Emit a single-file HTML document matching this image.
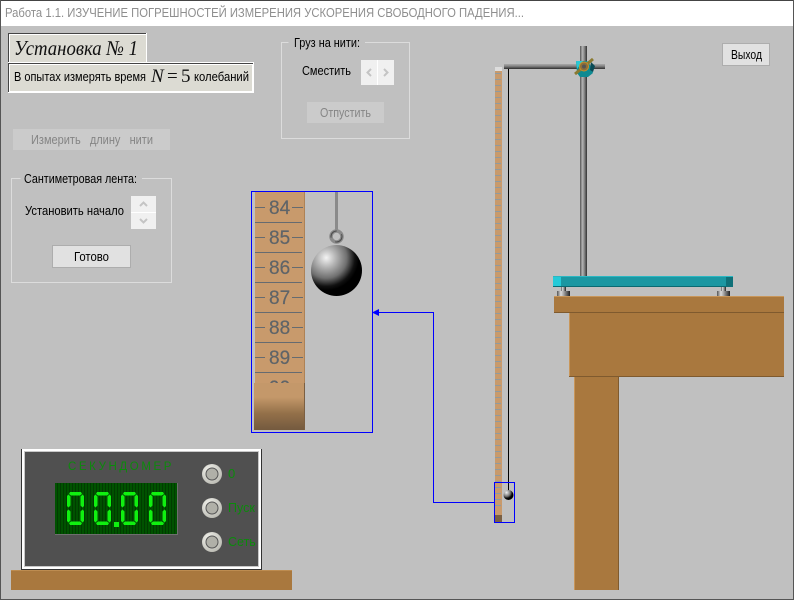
<!DOCTYPE html>
<html><head><meta charset="utf-8"><style>
html,body{margin:0;padding:0;background:#c0c0c0}
svg{display:block}
text{font-family:"Liberation Sans",sans-serif;font-size:13px}
.s{font-family:"Liberation Serif",serif}
.r{font-size:19px;fill:#5f6468;stroke:#5f6468;stroke-width:.2px}
</style></head><body>
<svg width="794" height="600" viewBox="0 0 794 600" xmlns="http://www.w3.org/2000/svg">
<defs>
<linearGradient id="vr" x1="0" x2="1" y1="0" y2="0"><stop offset="0" stop-color="#555"/><stop offset=".35" stop-color="#b5b5b5"/><stop offset=".6" stop-color="#8a8a8a"/><stop offset="1" stop-color="#333"/></linearGradient>
<linearGradient id="hr" x1="0" x2="0" y1="0" y2="1"><stop offset="0" stop-color="#aaa"/><stop offset=".4" stop-color="#888"/><stop offset="1" stop-color="#2e2e2e"/></linearGradient>
<linearGradient id="ft" x1="0" x2="1" y1="0" y2="0"><stop offset="0" stop-color="#555"/><stop offset=".3" stop-color="#ddd"/><stop offset="1" stop-color="#222"/></linearGradient>
<linearGradient id="rb" x1="0" x2="0" y1="0" y2="1"><stop offset="0" stop-color="#c4986a"/><stop offset=".3" stop-color="#c4986a"/><stop offset=".65" stop-color="#937049"/><stop offset="1" stop-color="#745a3f"/></linearGradient>
<radialGradient id="ball" cx=".3" cy=".25" r=".8"><stop offset="0" stop-color="#f4f4f4"/><stop offset=".22" stop-color="#b8b8b8"/><stop offset=".5" stop-color="#707070"/><stop offset=".7" stop-color="#111"/><stop offset=".8" stop-color="#000"/></radialGradient>
<radialGradient id="btn" cx=".35" cy=".3" r=".8"><stop offset="0" stop-color="#f0f0ea"/><stop offset="1" stop-color="#b8b8b0"/></radialGradient>
<pattern id="scan" width="3" height="3" patternUnits="userSpaceOnUse"><rect width="3" height="3" fill="#005200"/><rect width="1" height="3" fill="#003c00"/></pattern>
<pattern id="tk" width="6" height="6" patternUnits="userSpaceOnUse"><rect y="1" width="6" height="1" fill="#8f9aa0"/></pattern>
<g id="dg" fill="#10f010">
<polygon points="3,0 14,0 15,2 13,3.500 4,3.500 2,2"/>
<polygon points="1.500,2.500 3.500,4.500 3.500,13.500 1.500,15.500 0,14 0,4"/>
<polygon points="15.500,2.500 17,4 17,14 15.500,15.500 13.500,13.500 13.500,4.500"/>
<polygon points="1.500,17.500 3.500,19.500 3.500,28.500 1.500,30.500 0,29 0,19"/>
<polygon points="15.500,17.500 17,19 17,29 15.500,30.500 13.500,28.500 13.500,19.500"/>
<polygon points="4,29.500 13,29.500 15,31 14,33 3,33 2,31"/>
</g>
</defs>

<rect width="794" height="600" fill="#c0c0c0"/>
<rect width="794" height="26" fill="#fff"/>
<rect width="794" height="1" fill="#444"/>
<rect width="1" height="600" fill="#555"/>
<rect x="793" width="1" height="600" fill="#555"/>
<rect y="599" width="794" height="1" fill="#555"/>
<text x="5" y="17" fill="#8e8e8e" textLength="519" lengthAdjust="spacingAndGlyphs">Работа 1.1. ИЗУЧЕНИЕ ПОГРЕШНОСТЕЙ ИЗМЕРЕНИЯ УСКОРЕНИЯ СВОБОДНОГО ПАДЕНИЯ...</text>

<!-- panels -->
<rect x="8" y="33" width="139" height="30" fill="#fff"/>
<rect x="8" y="33" width="138" height="29" fill="#444"/>
<rect x="9" y="34" width="137" height="28" fill="#fff"/>
<rect x="10" y="35" width="136" height="27" fill="#dcdbd3"/>
<text class="s" x="14" y="55" style="font-size:21px;font-style:italic" fill="#111" textLength="124" lengthAdjust="spacingAndGlyphs">Установка № 1</text>
<rect x="8" y="62" width="246" height="31" fill="#fff"/>
<rect x="8" y="63" width="245" height="29" fill="#444"/>
<rect x="9" y="64" width="244" height="28" fill="#fff"/>
<rect x="10" y="65" width="242" height="26" fill="#dcdbd3"/>
<text x="14" y="81" fill="#000" textLength="132" lengthAdjust="spacingAndGlyphs">В опытах измерять время</text>
<text class="s" x="151" y="82" style="font-size:19px;font-style:italic" fill="#111">N</text>
<text class="s" x="167" y="82" style="font-size:19px" fill="#111">=</text>
<text class="s" x="181" y="82" style="font-size:19px" fill="#111">5</text>
<text x="194" y="81" fill="#000" textLength="55" lengthAdjust="spacingAndGlyphs">колебаний</text>

<!-- measure button -->
<rect x="13" y="129" width="157" height="21" fill="#cbcbcb"/>
<text x="31" y="144" fill="#858585" textLength="122" lengthAdjust="spacingAndGlyphs" xml:space="preserve">Измерить   длину   нити</text>

<!-- tape group -->
<path d="M20.500 178.500H11.500V282.500H171.500V178.500H142" fill="none" stroke="#dcdcdc"/>
<text x="24" y="183" fill="#000" textLength="113" lengthAdjust="spacingAndGlyphs">Сантиметровая лента:</text>
<text x="25" y="215" fill="#000" textLength="99" lengthAdjust="spacingAndGlyphs">Установить начало</text>
<rect x="131" y="196" width="25" height="33" fill="#f0f0f0"/>
<rect x="131" y="212" width="25" height="1" fill="#fff"/>
<path d="M140 206l3.500-3.500 3.500 3.500M140 219l3.500 3.500 3.500-3.500" fill="none" stroke="#c4c4c4" stroke-width="2"/>
<rect x="52.500" y="245.500" width="78" height="22" fill="#e1e1e1" stroke="#adadad"/>
<text x="74" y="261" fill="#000" textLength="35" lengthAdjust="spacingAndGlyphs">Готово</text>

<!-- load group -->
<path d="M288.500 42.500H281.500V138.500H409.500V42.500H365" fill="none" stroke="#dcdcdc"/>
<text x="294" y="47" fill="#000" textLength="66" lengthAdjust="spacingAndGlyphs">Груз на нити:</text>
<text x="302" y="75" fill="#000" textLength="49" lengthAdjust="spacingAndGlyphs">Сместить</text>
<rect x="361" y="60" width="33" height="25" fill="#f0f0f0"/>
<rect x="377" y="60" width="1" height="25" fill="#fff"/>
<path d="M371 69l-3.500 3.500 3.500 3.500M384 69l3.500 3.500-3.500 3.500" fill="none" stroke="#c4c4c4" stroke-width="2"/>
<rect x="307" y="102" width="77" height="21" fill="#cbcbcb"/>
<text x="320" y="117" fill="#858585" textLength="51" lengthAdjust="spacingAndGlyphs">Отпустить</text>

<!-- exit -->
<rect x="722.500" y="43.500" width="47" height="22" fill="#e1e1e1" stroke="#adadad"/>
<text x="731" y="59" fill="#000" textLength="31" lengthAdjust="spacingAndGlyphs">Выход</text>

<!-- magnified ruler -->
<rect x="255" y="192" width="49" height="191" fill="#c89a6c"/>
<rect x="304" y="192" width="1" height="191" fill="#ae8256"/>
<g fill="#666b70">
<rect x="255" y="207" width="10" height="1"/><rect x="292" y="207" width="11" height="1"/>
<rect x="255" y="237" width="10" height="1"/><rect x="292" y="237" width="11" height="1"/>
<rect x="255" y="267" width="10" height="1"/><rect x="292" y="267" width="11" height="1"/>
<rect x="255" y="297" width="10" height="1"/><rect x="292" y="297" width="11" height="1"/>
<rect x="255" y="327" width="10" height="1"/><rect x="292" y="327" width="11" height="1"/>
<rect x="255" y="357" width="10" height="1"/><rect x="292" y="357" width="11" height="1"/>
<rect x="255" y="222" width="47" height="1"/><rect x="255" y="252" width="47" height="1"/>
<rect x="255" y="282" width="47" height="1"/><rect x="255" y="312" width="47" height="1"/>
<rect x="255" y="342" width="47" height="1"/><rect x="255" y="372" width="47" height="1"/>
</g>
<text class="r" x="269" y="214">84</text>
<text class="r" x="269" y="244">85</text>
<text class="r" x="269" y="274">86</text>
<text class="r" x="269" y="304">87</text>
<text class="r" x="269" y="334">88</text>
<text class="r" x="269" y="364">89</text>
<text class="r" x="269" y="394">90</text>
<rect x="254" y="383" width="50" height="47" fill="url(#rb)"/>
<rect x="304" y="383" width="1" height="47" fill="#7b5f42"/>

<!-- magnified ball -->
<rect x="335" y="192" width="3" height="40" fill="#8a8a8a"/>
<circle cx="336.500" cy="236.500" r="5.500" fill="none" stroke="#8a8a8a" stroke-width="3.500"/>
<circle cx="336.500" cy="236.500" r="5.500" fill="none" stroke="#4a4a4a" stroke-width="1" stroke-dasharray="10 6"/>
<circle cx="336.500" cy="270.500" r="25.500" fill="url(#ball)"/>

<!-- blue -->
<rect x="251.500" y="191.500" width="121" height="241" fill="none" stroke="#00f"/>
<path d="M494 502.500H433.500V312.500H378" fill="none" stroke="#00f"/>
<polygon points="372,312.500 379,309 379,316" fill="#00f"/>

<!-- small ruler -->
<rect x="495" y="67" width="7" height="455" fill="#c89a6c"/>
<rect x="495" y="72" width="6" height="438" fill="url(#tk)"/>
<rect x="495" y="67" width="7" height="4" fill="#ddd"/>
<rect x="495" y="515" width="7" height="7" fill="#7a5f43"/>

<!-- thread and ball -->
<rect x="508" y="67" width="1" height="424" fill="#000"/>
<circle cx="508.500" cy="495" r="5" fill="url(#ball)"/>
<rect x="494.500" y="482.500" width="20" height="40" fill="none" stroke="#00f"/>

<!-- stand -->
<rect x="580" y="46" width="7" height="230" fill="url(#vr)"/>
<rect x="504" y="64" width="101" height="5" fill="url(#hr)"/>
<path d="M576 61h11l3 4 3 8-5 4h-8l-3-4z" fill="#0e8a92"/>
<path d="M576 61h7l-6 8z" fill="#28c8d4"/>
<path d="M591 62l4 4-2 6-3-2z" fill="#0a4a55"/>
<path d="M575 74l18-15" stroke="#8a7a30" stroke-width="3" fill="none"/>
<circle cx="584" cy="66.500" r="4.500" fill="#8c6f3a" stroke="#c8902a"/>
<circle cx="584" cy="66.500" r="2" fill="#555"/>

<!-- base -->
<rect x="553" y="276" width="180" height="11" fill="#1b97a2"/>
<rect x="553" y="276" width="180" height="1" fill="#2bb7c2"/>
<rect x="553" y="286" width="180" height="1" fill="#0a6a72"/>
<rect x="553" y="277" width="8" height="9" fill="#25cad8"/>
<rect x="726" y="277" width="7" height="10" fill="#0f7078"/>
<rect x="561" y="287" width="5" height="5" fill="url(#ft)"/>
<rect x="721" y="287" width="5" height="5" fill="url(#ft)"/>
<rect x="557" y="291" width="13" height="5" fill="url(#ft)"/>
<rect x="717" y="291" width="13" height="5" fill="url(#ft)"/>

<!-- table -->
<rect x="574" y="376" width="45" height="214" fill="#a9783e"/>
<rect x="574" y="376" width="1" height="214" fill="#c8965a"/>
<rect x="618" y="376" width="1" height="214" fill="#7f5a2e"/>
<rect x="569" y="313" width="215" height="64" fill="#a9783e"/>
<rect x="569" y="313" width="1" height="64" fill="#c8965a"/>
<rect x="569" y="376" width="215" height="1" fill="#7f5a2e"/>
<rect x="554" y="296" width="230" height="17" fill="#a9783e"/>
<rect x="554" y="296" width="230" height="1" fill="#c8965a"/>
<rect x="554" y="312" width="230" height="1" fill="#7f5a2e"/>

<!-- stopwatch shelf -->
<rect x="11" y="570" width="281" height="20" fill="#a9783e"/>
<rect x="11" y="570" width="281" height="1" fill="#bd8c50"/>

<!-- stopwatch -->
<rect x="21" y="449" width="241" height="121" fill="#333"/>
<rect x="22" y="449" width="239" height="120" fill="#fff"/>
<rect x="24" y="451" width="235" height="116" fill="#c8c8c8"/>
<rect x="25" y="452" width="233" height="114" fill="#505050"/>
<rect x="55" y="483" width="123" height="52" fill="#6e6e6e"/>
<rect x="55" y="483" width="122" height="51" fill="url(#scan)"/>
<use href="#dg" x="67" y="492"/>
<use href="#dg" x="94" y="492"/>
<use href="#dg" x="121" y="492"/>
<use href="#dg" x="149" y="492"/>
<rect x="114" y="522" width="5" height="5" fill="#10f010"/>

<circle cx="212" cy="474" r="10" fill="url(#btn)"/>
<circle cx="212" cy="474" r="6" fill="#b0b0a8" stroke="#555"/>
<circle cx="212" cy="508" r="10" fill="url(#btn)"/>
<circle cx="212" cy="508" r="6" fill="#b0b0a8" stroke="#555"/>
<circle cx="212" cy="542" r="10" fill="url(#btn)"/>
<circle cx="212" cy="542" r="6" fill="#b0b0a8" stroke="#555"/>
<g opacity=".99">
<text x="68" y="470" fill="#0c8a0c" style="font-size:11.500px;letter-spacing:2.600px">СЕКУНДОМЕР</text>
<text x="228" y="478" fill="#0c8a0c">0</text>
<text x="228" y="512" fill="#0c8a0c" style="font-size:12.500px">Пуск</text>
<text x="228" y="546" fill="#0c8a0c" style="font-size:12.500px">Сеть</text>
</g>
</svg>
</body></html>
